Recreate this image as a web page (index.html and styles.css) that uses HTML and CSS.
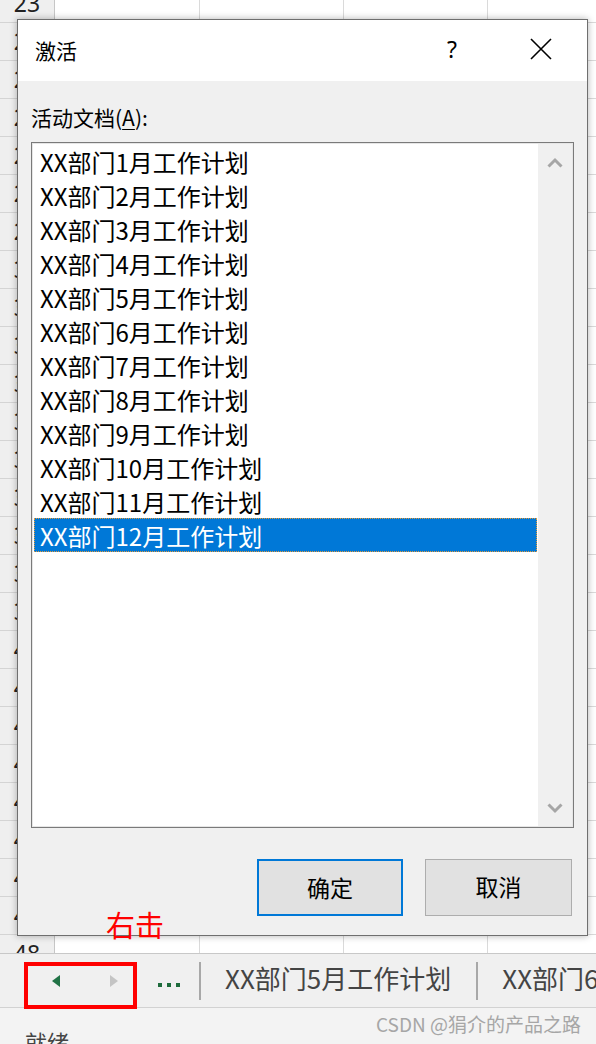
FILE: index.html
```html
<!DOCTYPE html>
<html lang="zh-CN">
<head>
<meta charset="utf-8">
<title>激活</title>
<link rel="stylesheet" href="styles.css">
</head>
<body>
<div class="app">
  <div class="sheet">
    <div class="rows">
      <div class="row"><div class="rh">23</div><div class="c"></div><div class="c"></div><div class="c"></div><div class="c"></div></div>
      <div class="row"><div class="rh">24</div><div class="c"></div><div class="c"></div><div class="c"></div><div class="c"></div></div>
      <div class="row"><div class="rh">25</div><div class="c"></div><div class="c"></div><div class="c"></div><div class="c"></div></div>
      <div class="row"><div class="rh">26</div><div class="c"></div><div class="c"></div><div class="c"></div><div class="c"></div></div>
      <div class="row"><div class="rh">27</div><div class="c"></div><div class="c"></div><div class="c"></div><div class="c"></div></div>
      <div class="row"><div class="rh">28</div><div class="c"></div><div class="c"></div><div class="c"></div><div class="c"></div></div>
      <div class="row"><div class="rh">29</div><div class="c"></div><div class="c"></div><div class="c"></div><div class="c"></div></div>
      <div class="row"><div class="rh">30</div><div class="c"></div><div class="c"></div><div class="c"></div><div class="c"></div></div>
      <div class="row"><div class="rh">31</div><div class="c"></div><div class="c"></div><div class="c"></div><div class="c"></div></div>
      <div class="row"><div class="rh">32</div><div class="c"></div><div class="c"></div><div class="c"></div><div class="c"></div></div>
      <div class="row"><div class="rh">33</div><div class="c"></div><div class="c"></div><div class="c"></div><div class="c"></div></div>
      <div class="row"><div class="rh">34</div><div class="c"></div><div class="c"></div><div class="c"></div><div class="c"></div></div>
      <div class="row"><div class="rh">35</div><div class="c"></div><div class="c"></div><div class="c"></div><div class="c"></div></div>
      <div class="row"><div class="rh">36</div><div class="c"></div><div class="c"></div><div class="c"></div><div class="c"></div></div>
      <div class="row"><div class="rh">37</div><div class="c"></div><div class="c"></div><div class="c"></div><div class="c"></div></div>
      <div class="row"><div class="rh">38</div><div class="c"></div><div class="c"></div><div class="c"></div><div class="c"></div></div>
      <div class="row"><div class="rh">39</div><div class="c"></div><div class="c"></div><div class="c"></div><div class="c"></div></div>
      <div class="row"><div class="rh">40</div><div class="c"></div><div class="c"></div><div class="c"></div><div class="c"></div></div>
      <div class="row"><div class="rh">41</div><div class="c"></div><div class="c"></div><div class="c"></div><div class="c"></div></div>
      <div class="row"><div class="rh">42</div><div class="c"></div><div class="c"></div><div class="c"></div><div class="c"></div></div>
      <div class="row"><div class="rh">43</div><div class="c"></div><div class="c"></div><div class="c"></div><div class="c"></div></div>
      <div class="row"><div class="rh">44</div><div class="c"></div><div class="c"></div><div class="c"></div><div class="c"></div></div>
      <div class="row"><div class="rh">45</div><div class="c"></div><div class="c"></div><div class="c"></div><div class="c"></div></div>
      <div class="row"><div class="rh">46</div><div class="c"></div><div class="c"></div><div class="c"></div><div class="c"></div></div>
      <div class="row"><div class="rh">47</div><div class="c"></div><div class="c"></div><div class="c"></div><div class="c"></div></div>
      <div class="row"><div class="rh">48</div><div class="c"></div><div class="c"></div><div class="c"></div><div class="c"></div></div>
    </div>
  </div>

  <div class="tabbar">
    <div class="nav">
      <span class="tri tri-left"></span>
      <span class="tri tri-right"></span>
    </div>
    <div class="dots"><i></i><i></i><i></i></div>
    <div class="sep"></div>
    <div class="tab">XX部门5月工作计划</div>
    <div class="sep"></div>
    <div class="tab">XX部门6月工作计划</div>
  </div>

  <div class="statusbar">就绪</div>

  <div class="dialog">
    <div class="titlebar">
      <div class="title">激活</div>
      <div class="help">?</div>
      <div class="close">
        <svg width="22" height="22" viewBox="0 0 22 22"><path d="M1 1 L21 21 M21 1 L1 21" stroke="#000" stroke-width="1.6" fill="none"/></svg>
      </div>
    </div>
    <div class="dbody">
      <div class="label">活动文档(<u>A</u>):</div>
      <div class="listbox">
        <div class="items">
          <div class="item">XX部门1月工作计划</div>
          <div class="item">XX部门2月工作计划</div>
          <div class="item">XX部门3月工作计划</div>
          <div class="item">XX部门4月工作计划</div>
          <div class="item">XX部门5月工作计划</div>
          <div class="item">XX部门6月工作计划</div>
          <div class="item">XX部门7月工作计划</div>
          <div class="item">XX部门8月工作计划</div>
          <div class="item">XX部门9月工作计划</div>
          <div class="item">XX部门10月工作计划</div>
          <div class="item">XX部门11月工作计划</div>
          <div class="item selected">XX部门12月工作计划</div>
        </div>
        <div class="scrollbar">
          <svg width="16" height="11" viewBox="0 0 16 11"><path d="M1.5 9.5 L8 3 L14.5 9.5" stroke="#a6a6a6" stroke-width="3" fill="none"/></svg>
          <svg width="16" height="11" viewBox="0 0 16 11"><path d="M1.5 1.5 L8 8 L14.5 1.5" stroke="#a6a6a6" stroke-width="3" fill="none"/></svg>
        </div>
      </div>
      <div class="buttons">
        <div class="btn btn-ok">确定</div>
        <div class="btn">取消</div>
      </div>
    </div>
  </div>

  <div class="anno-text">右击</div>
  <div class="anno-box"></div>
  <div class="watermark">CSDN @狷介的产品之路</div>
</div>
</body>
</html>
```

FILE: styles.css
```css
* { box-sizing: border-box; }
html, body {
  margin: 0;
  padding: 0;
}
body {
  width: 596px;
  height: 1044px;
  overflow: hidden;
  background: #ffffff;
  font-family: "Noto Sans CJK SC", "Noto Sans", sans-serif;
  color: #000;
}
.app {
  position: relative;
  width: 596px;
  height: 1044px;
  overflow: hidden;
}

/* spreadsheet grid */
.sheet {
  height: 953px;
  overflow: hidden;
  background: #fff;
}
.rows {
  margin-top: -15px;
}
.row {
  display: grid;
  grid-template-columns: 55px 145px 144px 144px 144px;
  height: 38px;
}
.rh {
  background: #efefef;
  border-right: 1px solid #c6c6c6;
  border-bottom: 1px solid #d4d4d4;
  font-size: 23px;
  line-height: 37px;
  text-align: center;
  color: #222;
  font-family: "Noto Sans", sans-serif;
}
.c {
  border-right: 1px solid #dadada;
  border-bottom: 1px solid #dadada;
}

/* sheet tabs */
.tabbar {
  height: 55px;
  background: #f0f0f0;
  border-top: 1px solid #c8c8c8;
  border-bottom: 1px solid #d2d2d2;
  display: flex;
  align-items: center;
  white-space: nowrap;
  overflow: hidden;
}
.tabbar > * {
  flex: none;
}
.nav {
  display: flex;
  align-items: center;
  width: 158px;
  padding-left: 52px;
}
.tri {
  display: block;
  flex: none;
  width: 0;
  height: 0;
  border-top: 6px solid transparent;
  border-bottom: 6px solid transparent;
}
.tri-left {
  border-right: 8px solid #217346;
}
.tri-right {
  margin-left: 50px;
  border-left: 8px solid #c4c4c4;
}
.dots {
  display: flex;
  gap: 5px;
  width: 41px;
  padding-top: 8px;
}
.dots i {
  display: block;
  flex: none;
  width: 4px;
  height: 4px;
  background: #1e6b3c;
}
.sep {
  width: 2px;
  height: 38px;
  background: #a8a8a8;
}
.tab {
  padding: 0 25px 0 24px;
  font-size: 26px;
  color: #444;
  line-height: 40px;
  margin-top: -6px;
}

/* status bar */
.statusbar {
  height: 36px;
  background: #f3f3f3;
  padding: 18px 0 0 25px;
  font-size: 22px;
  line-height: 30px;
  color: #444;
}

/* dialog */
.dialog {
  position: absolute;
  left: 17px;
  top: 19px;
  width: 571px;
  height: 917px;
  border: 1px solid #6f6f6f;
  background: #f0f0f0;
  box-shadow: 0 0 7px rgba(0, 0, 0, 0.3);
  display: flex;
  flex-direction: column;
}
.titlebar {
  height: 61px;
  background: #fff;
  display: flex;
  align-items: center;
  padding-right: 23px;
}
.title {
  flex: 1;
  padding-left: 17px;
  font-size: 21px;
  line-height: 30px;
  padding-bottom: 2px;
}
.help {
  width: 40px;
  margin-right: 46px;
  text-align: center;
  font-family: "Noto Sans", sans-serif;
  font-size: 23px;
  line-height: 30px;
  padding-bottom: 3px;
}
.close {
  width: 46px;
  height: 30px;
  display: flex;
  align-items: center;
  justify-content: center;
  padding-bottom: 3px;
}
.dbody {
  flex: 1;
  padding: 21px 13px 0 13px;
  display: flex;
  flex-direction: column;
}
.label {
  font-size: 21px;
  line-height: 30px;
  height: 30px;
}
.label u {
  text-decoration-thickness: 1px;
  text-underline-offset: 3px;
}
.listbox {
  margin-top: 10px;
  height: 686px;
  border: 1px solid #7a7a7a;
  padding: 1px;
  box-shadow: inset 0 0 0 1px #e6e6e6;
  background: #fff;
  display: flex;
}
.items {
  flex: 1;
}
.item {
  height: 34px;
  margin: 0 1px;
  padding-left: 5px;
  font-size: 24px;
  line-height: 33px;
  white-space: nowrap;
  border: 1px solid transparent;
}
.item.selected {
  background: #0078d7;
  color: #fff;
  border: 1px dotted #e39a3a;
}
.scrollbar {
  width: 34px;
  background: #f0f0f0;
  display: flex;
  flex-direction: column;
  justify-content: space-between;
  align-items: center;
  padding: 13px 0 12px 0;
}
.buttons {
  margin-top: 31px;
  display: flex;
  justify-content: flex-end;
  gap: 22px;
  padding-right: 2px;
}
.btn {
  width: 147px;
  height: 57px;
  background: #e1e1e1;
  border: 1px solid #adadad;
  font-size: 23px;
  line-height: 53px;
  text-align: center;
}
.btn-ok {
  width: 146px;
  border: 2px solid #0078d7;
}

/* annotations */
.anno-text {
  position: absolute;
  left: 106px;
  top: 904px;
  font-size: 29px;
  line-height: 40px;
  color: #ff0000;
}
.anno-box {
  position: absolute;
  left: 24px;
  top: 962px;
  width: 113px;
  height: 47px;
  border: 4px solid #ff0000;
}
.watermark {
  position: absolute;
  right: 15px;
  top: 1010px;
  font-size: 19px;
  line-height: 28px;
  color: #a6a6a6;
  white-space: nowrap;
}
```
